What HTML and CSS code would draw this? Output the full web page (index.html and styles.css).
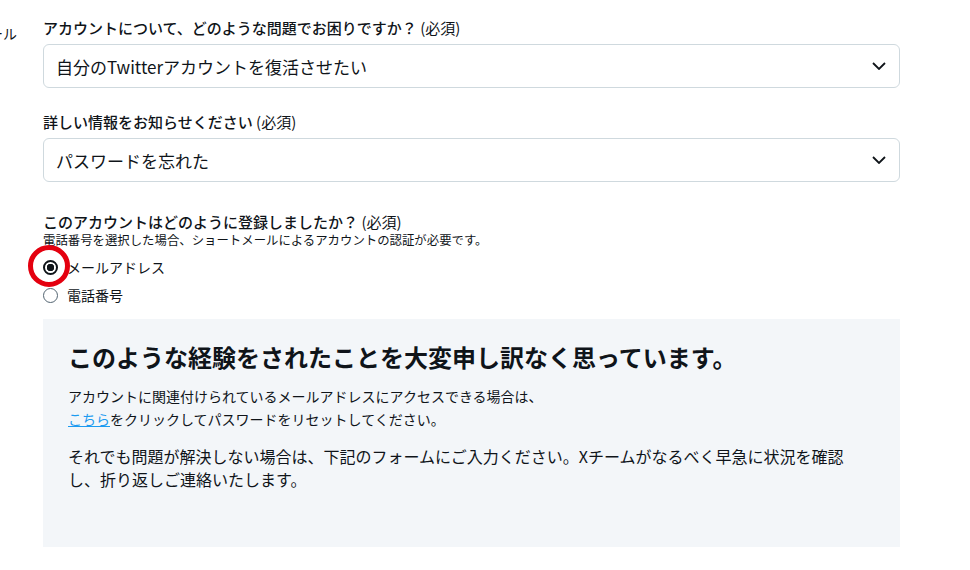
FILE: index.html
```html
<!DOCTYPE html>
<html lang="ja">
<head>
  <meta charset="UTF-8">
  <title>アカウントに関するお問い合わせ</title>
  <link rel="stylesheet" href="styles.css">
</head>
<body>
  <div class="page">
    <div class="side"><span>メール</span></div>

    <form class="form">
      <!-- 問題の種類 -->
      <div class="field">
        <label class="label">アカウントについて、どのような問題でお困りですか？ <span class="req">(必須)</span></label>
        <div class="select">
          <span>自分のTwitterアカウントを復活させたい</span>
          <svg class="chevron" viewBox="0 0 14 8" width="14" height="8"><path d="M1 1l6 6 6-6" fill="none" stroke="#0f1419" stroke-width="1.8"/></svg>
        </div>
      </div>

      <div class="field">
        <label class="label">詳しい情報をお知らせください <span class="req">(必須)</span></label>
        <div class="select">
          <span>パスワードを忘れた</span>
          <svg class="chevron" viewBox="0 0 14 8" width="14" height="8"><path d="M1 1l6 6 6-6" fill="none" stroke="#0f1419" stroke-width="1.8"/></svg>
        </div>
      </div>

      <!-- 登録方法 -->
      <div class="field field-radio">
        <label class="label">このアカウントはどのように登録しましたか？ <span class="req">(必須)</span></label>
        <div class="hint">電話番号を選択した場合、ショートメールによるアカウントの認証が必要です。</div>
        <label class="radio">
          <input type="radio" name="reg" checked>
          <span class="mark"></span>
          <span>メールアドレス</span>
        </label>
        <label class="radio">
          <input type="radio" name="reg">
          <span>電話番号</span>
        </label>
      </div>

      <div class="notice">
        <h2>このような経験をされたことを大変申し訳なく思っています。</h2>
        <p class="small">アカウントに関連付けられているメールアドレスにアクセスできる場合は、<br><a href="#">こちら</a>をクリックしてパスワードをリセットしてください。</p>
        <p>それでも問題が解決しない場合は、下記のフォームにご入力ください。Xチームがなるべく早急に状況を確認し、折り返しご連絡いたします。</p>
      </div>
    </form>
  </div>
</body>
</html>
```

FILE: styles.css
```css
body {
  margin: 0;
  padding: 0;
  font-family: "Noto Sans CJK JP", "Noto Sans", sans-serif;
  color: #0f1419;
  background: #fff;
}

.page {
  display: flex;
}

.side {
  width: 17px;
  margin-right: 26px;
  padding-top: 24px;
  display: flex;
  justify-content: flex-end;
  align-items: flex-start;
  overflow: hidden;
  font-size: 14px;
  line-height: 18px;
  white-space: nowrap;
}

.form {
  width: 857px;
  padding-top: 18px;
}

.field {
  margin-bottom: 24px;
}

.field-radio {
  margin-top: 30px;
  margin-bottom: 10px;
}

.label {
  display: block;
  font-size: 15px;
  line-height: 20px;
  font-weight: 500;
  margin-bottom: 6px;
}

.field-radio .label {
  margin-bottom: 0;
}

.req {
  font-weight: 400;
}

.select {
  height: 42px;
  border: 1px solid #cfd9de;
  border-radius: 6px;
  display: flex;
  align-items: center;
  justify-content: space-between;
  padding: 0 13px 0 12px;
  font-size: 17px;
}

.chevron {
  display: block;
}

.hint {
  font-size: 12.4px;
  line-height: 16px;
  margin-bottom: 5px;
}

.radio {
  position: relative;
  display: flex;
  align-items: center;
  height: 28px;
  font-size: 14px;
}

.radio input {
  appearance: none;
  width: 15px;
  height: 15px;
  margin: 0 9px 0 0;
  border: 1px solid #536471;
  border-radius: 50%;
  background: #fff;
}

.radio input:checked {
  border: 2px solid #0f1419;
  background: radial-gradient(circle, #0f1419 0 3.5px, #fff 4px);
}

.mark {
  position: absolute;
  left: -15px;
  top: -8px;
  width: 32px;
  height: 32px;
  border: 5px solid #e4000f;
  border-radius: 50%;
  pointer-events: none;
}

.notice {
  background: #f3f6f9;
  margin-top: 1px;
  padding: 22px 25px 56px;
}

.notice h2 {
  margin: 0 0 12px;
  font-size: 24px;
  line-height: 32px;
  font-weight: 700;
}

.notice p {
  margin: 0;
  font-size: 16px;
  line-height: 23px;
}

.notice p.small {
  font-size: 14px;
  margin-bottom: 14px;
}

.notice a {
  color: #1d9bf0;
  text-decoration: underline;
}
```
